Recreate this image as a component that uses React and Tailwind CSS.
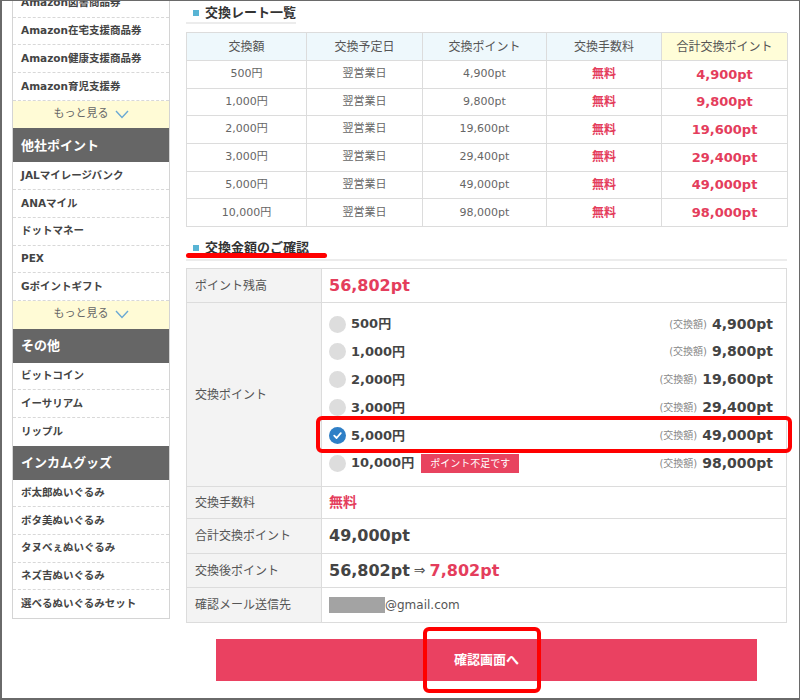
import React from "react";

const side = [
  { t: "item", v: "Amazon図書商品券" },
  { t: "item", v: "Amazon在宅支援商品券" },
  { t: "item", v: "Amazon健康支援商品券" },
  { t: "item", v: "Amazon育児支援券" },
  { t: "more" },
  { t: "head", v: "他社ポイント" },
  { t: "item", v: "JALマイレージバンク" },
  { t: "item", v: "ANAマイル" },
  { t: "item", v: "ドットマネー" },
  { t: "item", v: "PEX" },
  { t: "item", v: "Gポイントギフト" },
  { t: "more" },
  { t: "head", v: "その他" },
  { t: "item", v: "ビットコイン" },
  { t: "item", v: "イーサリアム" },
  { t: "item", v: "リップル" },
  { t: "head", v: "インカムグッズ" },
  { t: "item", v: "ボ太郎ぬいぐるみ" },
  { t: "item", v: "ボタ美ぬいぐるみ" },
  { t: "item", v: "タヌべぇぬいぐるみ" },
  { t: "item", v: "ネズ吉ぬいぐるみ" },
  { t: "item", v: "選べるぬいぐるみセット" },
];

const rates = [
  ["500円", "4,900pt"],
  ["1,000円", "9,800pt"],
  ["2,000円", "19,600pt"],
  ["3,000円", "29,400pt"],
  ["5,000円", "49,000pt"],
  ["10,000円", "98,000pt"],
];

function Chevron() {
  return (
    <svg width="14" height="9" viewBox="0 0 14 9" className="ml-[6px]">
      <polyline points="1,1 7,7.5 13,1" fill="none" stroke="#6ba9d4" strokeWidth="1.4" />
    </svg>
  );
}

function Sidebar() {
  return (
    <div className="w-[158px] shrink-0 -mt-[11px] self-start border-x border-b border-[#d4d4d4] bg-white">
      {side.map((s, i) => {
        if (s.t === "head")
          return (
            <div key={i} className="h-[34px] bg-[#666666] text-white font-bold text-[13px] flex items-center pl-[8px]">
              {s.v}
            </div>
          );
        if (s.t === "more")
          return (
            <div key={i} className="h-[27.7px] bg-[#fffbd6] text-[#666] text-[11px] flex items-center justify-center">
              もっと見る
              <Chevron />
            </div>
          );
        const next = side[i + 1];
        const noBorder = !next || next.t === "head";
        return (
          <div
            key={i}
            className={
              "h-[27.7px] flex items-center pl-[8px] text-[10.5px] font-bold text-[#444] " +
              (noBorder ? "" : "border-b border-dashed border-[#d8d8d8]")
            }
          >
            {s.v}
          </div>
        );
      })}
    </div>
  );
}

function Title({ children }) {
  return (
    <div className="flex items-center gap-[6px] pl-[7px] border-b-2 border-[#ececec] font-bold text-[13px] text-[#333]">
      <span className="w-[6px] h-[6px] bg-[#58b4d4] inline-block" />
      {children}
    </div>
  );
}

function RateTable() {
  const cols = "grid grid-cols-[120px_116px_124px_115px_126px]";
  const cell = "border-r border-b border-[#dcdcdc] flex items-center justify-center";
  return (
    <div className="border-l border-t border-[#dcdcdc] mt-[7px]">
      <div className={cols + " h-[28px] text-[12px] text-[#555]"}>
        {["交換額", "交換予定日", "交換ポイント", "交換手数料"].map((h) => (
          <div key={h} className={cell + " bg-[#eef8fc]"}>
            {h}
          </div>
        ))}
        <div className={cell + " bg-[#fffdd8]"}>合計交換ポイント</div>
      </div>
      {rates.map(([a, b]) => (
        <div key={a} className={cols + " h-[27.7px] text-[11px] text-[#666]"}>
          <div className={cell}>{a}</div>
          <div className={cell}>翌営業日</div>
          <div className={cell}>{b}</div>
          <div className={cell + " text-[#e43d5c] font-bold text-[12px]"}>無料</div>
          <div className={cell + " text-[#e43d5c] font-bold text-[13px]"}>{b}</div>
        </div>
      ))}
    </div>
  );
}

function Radio({ checked }) {
  if (checked)
    return (
      <span className="w-[17px] h-[17px] rounded-full bg-[#2f7fc6] flex items-center justify-center shrink-0">
        <svg width="11" height="11" viewBox="0 0 11 11">
          <polyline points="2.2,5.6 4.6,8 8.8,3.2" fill="none" stroke="white" strokeWidth="1.8" strokeLinecap="round" strokeLinejoin="round" />
        </svg>
      </span>
    );
  return <span className="w-[17px] h-[17px] rounded-full bg-[#dddddd] shrink-0" />;
}

function Row({ label, h, children, pad = true }) {
  return (
    <div className={"flex border-b border-[#dcdcdc] " + h}>
      <div className="w-[135px] shrink-0 bg-[#f3f3f3] border-r border-[#dcdcdc] flex items-center pl-[8px] text-[12px] text-[#555]">
        {label}
      </div>
      <div className={"flex-1 flex items-center " + (pad ? "pl-[7px]" : "")}>{children}</div>
    </div>
  );
}

function ConfirmTable() {
  return (
    <div className="border-l border-r border-t border-[#dcdcdc] mt-[7px]">
      <Row label="ポイント残高" h="h-[34px]">
        <span className="text-[16px] font-bold text-[#e43d5c]">56,802pt</span>
      </Row>
      <Row label="交換ポイント" h="h-[184px]" pad={false}>
        <div className="flex-1 flex flex-col pt-[7px] pb-[9px] pl-[7px] pr-[13px]">
          {rates.map(([a, b], i) => (
            <div key={a} className="h-[27.8px] flex items-center">
              <Radio checked={i === 4} />
              <span className="ml-[5px] text-[13px] font-bold text-[#444]">{a}</span>
              {i === 5 && (
                <span className="ml-[7px] h-[19px] px-[9px] bg-[#e8435f] text-white text-[10px] flex items-center">
                  ポイント不足です
                </span>
              )}
              <span className="ml-auto text-[10px] text-[#888] mr-[5px]">(交換額)</span>
              <span className="text-[14px] font-bold text-[#444]">{b}</span>
            </div>
          ))}
        </div>
      </Row>
      <Row label="交換手数料" h="h-[32px]">
        <span className="text-[14px] font-bold text-[#e43d5c]">無料</span>
      </Row>
      <Row label="合計交換ポイント" h="h-[35px]">
        <span className="text-[16px] font-bold text-[#444]">49,000pt</span>
      </Row>
      <Row label="交換後ポイント" h="h-[34px]">
        <span className="text-[16px] font-bold text-[#444]">56,802pt</span>
        <span className="text-[14px] text-[#555] mx-[4px]">⇒</span>
        <span className="text-[16px] font-bold text-[#e43d5c]">7,802pt</span>
      </Row>
      <Row label="確認メール送信先" h="h-[35px]">
        <span className="w-[56px] h-[16px] bg-[#a3a3a3] inline-block" />
        <span className="text-[12px] text-[#555]">@gmail.com</span>
      </Row>
    </div>
  );
}

export default function App() {
  return (
    <div className="relative w-[800px] h-[700px] overflow-hidden bg-white border-t border-r border-l-2 border-b-2 border-[#6a6a6a] font-['DejaVu_Sans','Noto_Sans_CJK_JP',sans-serif]">
      <div className="flex pl-[10px] gap-[16px]">
        <Sidebar />
        <div className="w-[601px] shrink-0">
          <div className="h-[24px] flex flex-col justify-end">
            <div className="h-[23px] flex items-center">
              <Title>交換レート一覧</Title>
            </div>
          </div>
          <RateTable />
          <div className="mt-[10px]">
            <Title>
              <span className="h-[22px] flex items-center">交換金額のご確認</span>
            </Title>
          </div>
          <ConfirmTable />
          <div className="mt-[16px] mx-[30px] h-[42px] bg-[#ea4161] flex items-center justify-center text-white font-bold text-[13px]">
            確認画面へ
          </div>
        </div>
      </div>
      {/* annotations */}
      <div className="absolute left-[184px] top-[252px] w-[141px] h-[5px] rounded-full bg-[#ff0000]" />
      <div className="absolute left-[314px] top-[415px] w-[476px] h-[37px] rounded-[6px] border-4 border-[#ff0000]" />
      <div className="absolute left-[421px] top-[626px] w-[118px] h-[66px] rounded-[6px] border-4 border-[#ff0000]" />
    </div>
  );
}
